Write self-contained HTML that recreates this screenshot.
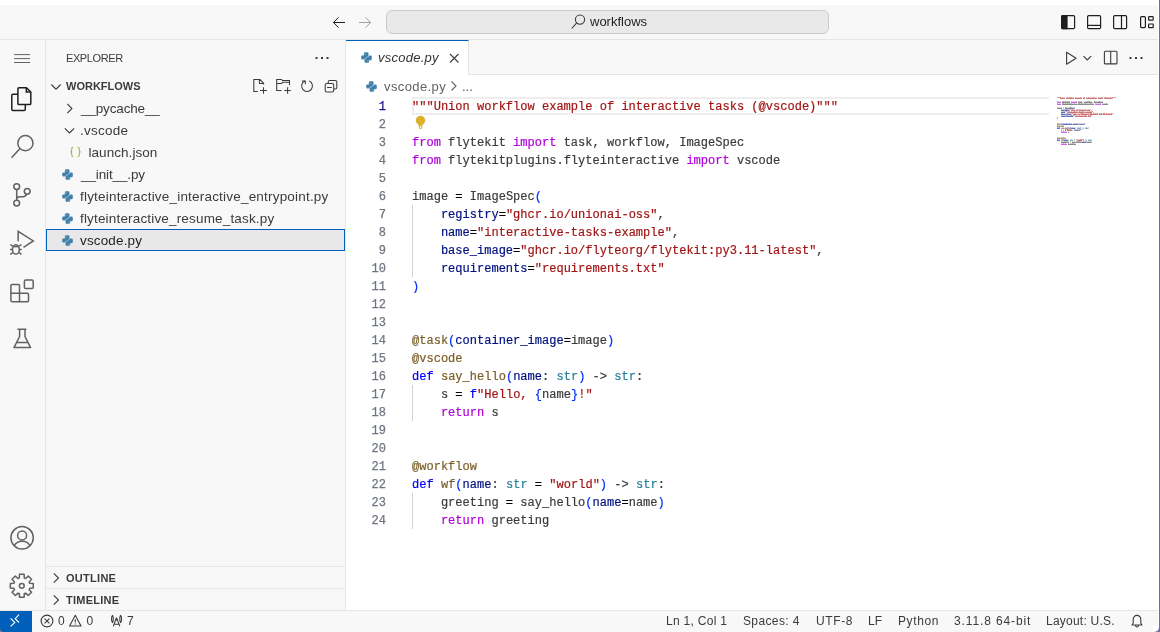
<!DOCTYPE html>
<html><head><meta charset="utf-8">
<style>
*{box-sizing:border-box;margin:0;padding:0}
html,body{width:1160px;height:632px;overflow:hidden;background:#ffffff}
body{position:relative;will-change:transform;font-family:"Liberation Sans",sans-serif;color:#3b3b3b}
.a{position:absolute}
svg{position:absolute;overflow:visible}
.t{position:absolute;white-space:pre;line-height:1}
#titlebar{left:0;top:5px;width:1158px;height:35px;background:#f8f8f8;border-bottom:1px solid #e5e5e5}
#act{left:0;top:40px;width:46px;height:571px;background:#f8f8f8;border-right:1px solid #e5e5e5}
#side{left:46px;top:40px;width:300px;height:571px;background:#f8f8f8;border-right:1px solid #e5e5e5}
#tabs{left:346px;top:40px;width:812px;height:35px;background:#f8f8f8;border-bottom:1px solid #e5e5e5}
#editor{left:346px;top:75px;width:813px;height:536px;background:#fff}
#status{left:0;top:610px;width:1158px;height:22px;background:#f8f8f8;border-top:1px solid #e5e5e5}
#rightedge{left:1159px;top:0;width:1px;height:632px;background:#6e6e96}
.code{position:absolute;left:412px;font-family:"Liberation Mono",monospace;font-size:12.04px;line-height:18px;white-space:pre;color:#3b3b3b;-webkit-text-stroke:0.2px}
.ln{position:absolute;left:350px;width:36px;text-align:right;font-family:"Liberation Mono",monospace;font-size:12px;line-height:18px;color:#6e7681;-webkit-text-stroke:0.25px}
.k{color:#af00db}.s{color:#a31515}.d{color:#0000ff}.f{color:#795e26}.p{color:#001080}.ty{color:#267f99}.b{color:#0431fa}.o{color:#000}
.row{position:absolute;left:46px;width:299px;height:22px;font-size:13.5px;line-height:22px;color:#3b3b3b;white-space:pre}
</style></head><body>
<div id="rightedge" class="a"></div>
<div id="titlebar" class="a"></div>
<div id="act" class="a"></div>
<div id="side" class="a"></div>
<div id="tabs" class="a"></div>
<div id="editor" class="a"></div>
<div id="status" class="a"></div>

<!-- title bar -->
<svg style="left:332px;top:16px" width="14" height="12" viewBox="0 0 14 12"><path d="M13 6.5H1.5M6.6 1.3L1.4 6.5l5.2 5.2" fill="none" stroke="#1f1f1f" stroke-width="1"/></svg>
<svg style="left:358px;top:16px" width="14" height="12" viewBox="0 0 14 12"><path d="M1 6.5h11.5M7.4 1.3l5.2 5.2-5.2 5.2" fill="none" stroke="#a0a0a0" stroke-width="1"/></svg>
<div class="a" style="left:386px;top:10px;width:443px;height:24px;background:#e9e9e9;border:1px solid #cbcbcb;border-radius:6px"></div>
<svg style="left:571px;top:14px" width="15" height="15" viewBox="0 0 15 15"><circle cx="9" cy="5.6" r="4.6" fill="none" stroke="#3b3b3b" stroke-width="1.1"/><path d="M5.7 8.9L0.8 14.5" stroke="#3b3b3b" stroke-width="1.1"/></svg>
<div class="t" style="left:590px;top:15px;font-size:13px;color:#1f1f1f">workflows</div>


<!-- activity bar -->
<svg style="left:0;top:40px" width="46" height="571" viewBox="0 0 46 571">
 <g fill="none" stroke="#616161" stroke-width="1">
  <path d="M14 14.6h16M14 18.6h16M14 22.5h16"/>
 </g>
 <g fill="none" stroke="#1f1f1f" stroke-width="1.5" stroke-linejoin="round">
  <path d="M17.8 54.2H12.9a1.1 1.1 0 0 0-1.1 1.1v14a1.1 1.1 0 0 0 1.1 1.1h11.3a1.1 1.1 0 0 0 1.1-1.1v-4.5"/>
  <path d="M19 47.7h7.5l4.3 4.3v11.4a1.1 1.1 0 0 1-1.1 1.1H19a1.1 1.1 0 0 1-1.1-1.1V48.8a1.1 1.1 0 0 1 1.1-1.1z"/>
  <path d="M26.3 47.9v4.2h4.3" stroke-linejoin="miter"/>
 </g>
 <g fill="none" stroke="#616161" stroke-width="1.5">
  <circle cx="25.4" cy="103.2" r="7.6"/>
  <path d="M19.8 108.8L11.5 117.8"/>
  <circle cx="16.7" cy="146.6" r="2.9"/>
  <circle cx="27.2" cy="151.3" r="2.9"/>
  <circle cx="16.7" cy="163.1" r="2.9"/>
  <path d="M16.7 149.5v10.7M16.7 159.3c0-1.8 1.5-2.6 3.6-2.6h2.6c2.2 0 3.4-1.1 3.9-2.6"/>
  <path d="M18.15 201.2V191.3L33.3 200.9 23.5 207.3"/>
  <ellipse cx="15.9" cy="209.4" rx="3.4" ry="4.7"/><path d="M12.8 206.6h6.2"/>
  <path d="M12.7 206.1L10.3 204.5M19.1 206.1L21.5 204.5M10.1 209.6H12.5M21.7 209.6H19.3M12.7 212.6L10.3 214.3M19.1 212.6L21.5 214.3"/>
  <path d="M10.9 253.3V245.8a1.2 1.2 0 0 1 1.2-1.2H18.3a1.2 1.2 0 0 1 1.2 1.2V253.3H27.3a1.2 1.2 0 0 1 1.2 1.2V260.6a1.2 1.2 0 0 1-1.2 1.2H12.1a1.2 1.2 0 0 1-1.2-1.2ZM10.9 253.3H19.5V261.8"/>
  <rect x="24.4" y="240" width="8.8" height="8.6" rx="1.3"/>
  <path d="M17.4 289.2h9M19.6 289.2v7.3L14 307.6h16.6l-5.6-11.1v-7.3M16.4 302.4h11.2" stroke-linejoin="round"/>
  <circle cx="22.1" cy="497.8" r="11.2"/>
  <circle cx="22.1" cy="495.4" r="4.5"/>
  <path d="M14.2 505.8c1.6-3 4.5-4.6 7.9-4.6s6.3 1.6 7.9 4.6"/>
 </g>
 <g fill="none" stroke="#616161" stroke-width="1.5" stroke-linejoin="round">
  <path d="M29.73 543.35 L33.27 543.48 L33.27 548.12 L29.73 548.25 L29.14 549.67 L31.55 552.26 L28.26 555.55 L25.67 553.14 L24.25 553.73 L24.12 557.27 L19.48 557.27 L19.35 553.73 L17.93 553.14 L15.34 555.55 L12.05 552.26 L14.46 549.67 L13.87 548.25 L10.33 548.12 L10.33 543.48 L13.87 543.35 L14.46 541.93 L12.05 539.34 L15.34 536.05 L17.93 538.46 L19.35 537.87 L19.48 534.33 L24.12 534.33 L24.25 537.87 L25.67 538.46 L28.26 536.05 L31.55 539.34 L29.14 541.93Z"/>
  <circle cx="21.8" cy="545.8" r="2.4"/>
 </g>
</svg>

<!-- sidebar -->
<div class="t" style="left:66px;top:53px;font-size:11px;letter-spacing:-0.4px;color:#3b3b3b">EXPLORER</div>
<svg style="left:314px;top:56px" width="16" height="4" viewBox="0 0 16 4"><g fill="#3b3b3b"><rect x="1.5" y="1" width="2" height="2"/><rect x="7" y="1" width="2" height="2"/><rect x="12.5" y="1" width="2" height="2"/></g></svg>
<svg style="left:50px;top:80px" width="14" height="12" viewBox="0 0 14 12"><path d="M1.3 4.5l4.7 4.7 4.7-4.7" fill="none" stroke="#3b3b3b" stroke-width="1.1"/></svg>
<div class="t" style="left:66px;top:81px;font-size:11px;font-weight:bold;color:#3b3b3b">WORKFLOWS</div>
<svg style="left:245px;top:75px" width="100" height="22" viewBox="0 0 100 22" fill="none" stroke="#3b3b3b" stroke-width="1.05">
 <path d="M12.8 16.4H8.8V4.4h6.2l3.6 3.9v1.3M14.4 4.4v4h4.2"/>
 <path d="M15 15.4h7M18.5 12.2v6.6"/>
 <path d="M36.5 15.4h-4.8V4.4h4.8l1 1.1h7v4.4M31.7 8.5h4.8l1-1.2h7"/>
 <path d="M39.3 15.4h6.5M42.6 12.2v6.6"/>
 <path d="M64.3 6.1a5.4 5.4 0 1 1-4.5 0"/>
 <path d="M56.9 5.9h3.4v3.4"/>
 <rect x="83.2" y="5.5" width="8.6" height="8.5" rx="1.6"/>
 <rect x="80.2" y="8.5" width="8.5" height="8.5" rx="1.6" fill="#f8f8f8"/>
 <path d="M82.1 12.5h4.7"/>
</svg>
<div class="row" style="top:97px"><svg style="left:20px;top:6px" width="8" height="11" viewBox="0 0 8 11"><path d="M1.3 0.8l4.6 4.7-4.6 4.7" fill="none" stroke="#3b3b3b" stroke-width="1.1"/></svg><span class="a" style="left:35px;top:1px;letter-spacing:-0.15px">__pycache__</span></div>
<div class="row" style="top:119px"><svg style="left:18px;top:8px" width="12" height="8" viewBox="0 0 12 8"><path d="M0.8 1.3l4.7 4.6 4.7-4.6" fill="none" stroke="#3b3b3b" stroke-width="1.1"/></svg><span class="a" style="left:34px;top:1px;letter-spacing:0.23px">.vscode</span></div>
<div class="row" style="top:141px"><svg style="left:23px;top:5px" width="13" height="12" viewBox="0 0 13 12"><path d="M4.3 1.2c-1 0-1.6.5-1.6 1.5v1.9c0 .8-.5 1.3-1.3 1.3.8 0 1.3.5 1.3 1.3v1.9c0 1 .6 1.5 1.6 1.5M8.7 1.2c1 0 1.6.5 1.6 1.5v1.9c0 .8.5 1.3 1.3 1.3-.8 0-1.3.5-1.3 1.3v1.9c0 1-.6 1.5-1.6 1.5" fill="none" stroke="#b0b23a" stroke-width="1.1"/></svg><span class="a" style="left:42.5px;top:1px;letter-spacing:0.05px">launch.json</span></div>
<div class="row" style="top:163px"><svg class="py" style="left:16px;top:6px" width="11" height="11" viewBox="0 0 11 11"><use href="#pyi"/></svg><span class="a" style="left:35px;top:1px;letter-spacing:-0.12px">__init__.py</span></div>
<div class="row" style="top:185px"><svg class="py" style="left:16px;top:6px" width="11" height="11" viewBox="0 0 11 11"><use href="#pyi"/></svg><span class="a" style="left:34px;top:1px;letter-spacing:0.2px">flyteinteractive_interactive_entrypoint.py</span></div>
<div class="row" style="top:207px"><svg class="py" style="left:16px;top:6px" width="11" height="11" viewBox="0 0 11 11"><use href="#pyi"/></svg><span class="a" style="left:34px;top:1px;letter-spacing:0.17px">flyteinteractive_resume_task.py</span></div>
<div class="row" style="top:229px;background:#e8e8e8;border:1px solid #005fb8;line-height:20px"><svg class="py" style="left:15px;top:5px" width="11" height="11" viewBox="0 0 11 11"><use href="#pyi"/></svg><span class="a" style="left:33px;top:1px;color:#1f1f1f;letter-spacing:0.15px">vscode.py</span></div>
<div class="a" style="left:46px;top:566px;width:299px;height:1px;background:#e5e5e5"></div>
<div class="a" style="left:46px;top:588px;width:299px;height:1px;background:#e5e5e5"></div>
<svg style="left:50px;top:572px" width="12" height="12" viewBox="0 0 12 12"><path d="M3.8 1.3l4.7 4.7-4.7 4.7" fill="none" stroke="#3b3b3b" stroke-width="1.1"/></svg>
<div class="t" style="left:66px;top:573px;font-size:11px;font-weight:bold;letter-spacing:0.28px;color:#3b3b3b">OUTLINE</div>
<svg style="left:50px;top:594px" width="12" height="12" viewBox="0 0 12 12"><path d="M3.8 1.3l4.7 4.7-4.7 4.7" fill="none" stroke="#3b3b3b" stroke-width="1.1"/></svg>
<div class="t" style="left:66px;top:595px;font-size:11px;font-weight:bold;letter-spacing:0.25px;color:#3b3b3b">TIMELINE</div>
<svg width="0" height="0" style="position:absolute"><defs><g id="pyi"><path d="M2.8 3.4V1.4A1.2 1.2 0 0 1 4 0.2H6.3A1.2 1.2 0 0 1 7.5 1.4V4.0L2.9 7.2L2.6 7.5H1.4A1.2 1.2 0 0 1 0.2 6.3V4.6A1.2 1.2 0 0 1 1.4 3.4Z" fill="#4180a8"/><path d="M8.2 8.2V9.6A1.2 1.2 0 0 1 7 10.8H4.7A1.2 1.2 0 0 1 3.5 9.6V7.3L8.1 4.1L8.4 3.6H9.6A1.2 1.2 0 0 1 10.8 4.8V7A1.2 1.2 0 0 1 9.6 8.2Z" fill="#4180a8"/><circle cx="4" cy="1.9" r="0.6" fill="#fff" fill-opacity="0.5"/><circle cx="7" cy="9.1" r="0.6" fill="#fff" fill-opacity="0.5"/></g></defs></svg>

<!-- tabs -->
<div class="a" style="left:346px;top:40px;width:123px;height:35px;background:#fff;border-top:1px solid #005fb8;border-right:1px solid #e5e5e5"></div>
<svg style="left:360.5px;top:52px" width="11" height="11" viewBox="0 0 11 11"><use href="#pyi"/></svg>
<div class="t" style="left:378px;top:51px;font-size:13px;font-style:italic;letter-spacing:0.25px;color:#333">vscode.py</div>
<svg style="left:448px;top:52px" width="12" height="12" viewBox="0 0 12 12"><path d="M2 2l8.5 8.5M10.5 2L2 10.5" stroke="#3b3b3b" stroke-width="1.1"/></svg>
<svg style="left:1060px;top:45px" width="95" height="25" viewBox="0 0 95 25" fill="none" stroke="#3b3b3b" stroke-width="1.1">
 <path d="M6.6 7.2v12l9.5-6z" stroke-linejoin="round"/>
 <path d="M23.5 11.2l3.8 3.8 3.8-3.8"/>
 <rect x="44.4" y="6.3" width="12.6" height="12.6" rx="1"/><path d="M50.7 6.3v12.6"/>
</svg>
<svg style="left:1128px;top:56px" width="16" height="4" viewBox="0 0 16 4"><g fill="#3b3b3b"><rect x="1.5" y="1" width="2" height="2"/><rect x="7" y="1" width="2" height="2"/><rect x="12.5" y="1" width="2" height="2"/></g></svg>
<!-- breadcrumb -->
<svg style="left:366px;top:81px" width="11" height="11" viewBox="0 0 11 11"><use href="#pyi"/></svg>
<div class="t" style="left:384px;top:80px;font-size:13px;letter-spacing:0.4px;color:#616161">vscode.py</div>
<svg style="left:450px;top:80px" width="8" height="12" viewBox="0 0 8 12"><path d="M1.5 1.5l4.5 4.5-4.5 4.5" fill="none" stroke="#616161" stroke-width="1.1"/></svg>
<div class="t" style="left:462px;top:80px;font-size:13px;color:#616161">...</div>
<!-- current line -->
<div class="a" style="left:412px;top:97px;width:637px;height:18px;border:2px solid #eeeeee;border-right:0"></div>
<!-- indent guides -->
<div class="a" style="left:412px;top:205px;width:1px;height:72px;background:#d3d3d3"></div>
<div class="a" style="left:412px;top:385px;width:1px;height:36px;background:#d3d3d3"></div>
<div class="a" style="left:412px;top:493px;width:1px;height:36px;background:#d3d3d3"></div>
<!-- lightbulb -->
<svg style="left:414px;top:115px" width="13" height="15" viewBox="0 0 13 15"><circle cx="6.5" cy="5.5" r="4.7" fill="#dcb02c"/><path d="M4.6 9h3.8v3a1.9 1.9 0 0 1-3.8 0z" fill="#dcb02c"/><circle cx="6.5" cy="11.9" r="0.9" fill="#fff"/></svg>
<div class="ln" style="top:98px"><span style="color:#171184">1</span><br>2<br>3<br>4<br>5<br>6<br>7<br>8<br>9<br>10<br>11<br>12<br>13<br>14<br>15<br>16<br>17<br>18<br>19<br>20<br>21<br>22<br>23<br>24</div>
<div class="code" style="top:98px"><span class="s">"""Union workflow example of interactive tasks (@vscode)"""</span>

<span class="k">from</span> flytekit <span class="k">import</span> task, workflow, ImageSpec
<span class="k">from</span> flytekitplugins.flyteinteractive <span class="k">import</span> vscode

image <span class="o">=</span> ImageSpec<span class="b">(</span>
    <span class="p">registry</span><span class="o">=</span><span class="s">"ghcr.io/unionai-oss"</span>,
    <span class="p">name</span><span class="o">=</span><span class="s">"interactive-tasks-example"</span>,
    <span class="p">base_image</span><span class="o">=</span><span class="s">"ghcr.io/flyteorg/flytekit:py3.11-latest"</span>,
    <span class="p">requirements</span><span class="o">=</span><span class="s">"requirements.txt"</span>
<span class="b">)</span>


<span class="f">@task</span><span class="b">(</span><span class="p">container_image</span><span class="o">=</span>image<span class="b">)</span>
<span class="f">@vscode</span>
<span class="d">def</span> <span class="f">say_hello</span><span class="b">(</span><span class="p">name</span>: <span class="ty">str</span><span class="b">)</span> -&gt; <span class="ty">str</span>:
    s <span class="o">=</span> <span class="d">f</span><span class="s">"Hello, </span><span class="b">{</span>name<span class="b">}</span><span class="s">!"</span>
    <span class="k">return</span> s


<span class="f">@workflow</span>
<span class="d">def</span> <span class="f">wf</span><span class="b">(</span><span class="p">name</span>: <span class="ty">str</span> <span class="o">=</span> <span class="s">"world"</span><span class="b">)</span> -&gt; <span class="ty">str</span>:
    greeting <span class="o">=</span> say_hello<span class="b">(</span><span class="p">name</span><span class="o">=</span>name<span class="b">)</span>
    <span class="k">return</span> greeting</div>

<!-- layout icons -->
<svg style="left:1058px;top:12px" width="100" height="20" viewBox="0 0 100 20" fill="none" stroke="#1f1f1f" stroke-width="1.2">
 <rect x="3.6" y="3.6" width="13" height="13" rx="1.2"/><path d="M3.6 4.8a1.2 1.2 0 0 1 1.2-1.2H9v13H4.8a1.2 1.2 0 0 1-1.2-1.2z" fill="#1f1f1f"/>
 <rect x="29.6" y="3.6" width="13" height="13" rx="1.2"/><path d="M29.6 13.4h13"/>
 <rect x="55.6" y="3.6" width="13" height="13" rx="1.2"/><path d="M63.5 3.6v13"/>
 <rect x="82.6" y="4.6" width="4.8" height="11" rx="1"/><rect x="90.6" y="4.6" width="4.6" height="3.6" rx="0.7"/><rect x="90.6" y="12" width="4.6" height="3.6" rx="0.7"/>
</svg>
<!-- status bar -->
<div class="a" style="left:0;top:611px;width:32px;height:21px;background:#005fb8"></div>
<svg style="left:9px;top:613px" width="14" height="16" viewBox="0 0 14 16"><path d="M1.6 5.5l4.2 3.9-4.2 3.9M10 1.7L6.2 5.7 10 9.5" fill="none" stroke="#fff" stroke-width="1.1"/></svg>
<svg style="left:40px;top:614px" width="100" height="14" viewBox="0 0 100 14" fill="none" stroke="#3b3b3b" stroke-width="1.1">
 <circle cx="7" cy="7" r="5.9"/><path d="M4.6 4.6l4.8 4.8M9.4 4.6L4.6 9.4"/>
 <path d="M35.3 1.3L29.6 12h11.4z" stroke-linejoin="round"/><path d="M35.3 5.2v3.4M35.3 9.6v1"/>
 <path d="M72.5 1.4c-1.3 1.6-1.3 5.6 0 7.2M72.5 1.4c1.1 1.6 1.1 5.6 0 7.2M80.6 1.4c-1.1 1.6-1.1 5.6 0 7.2M80.6 1.4c1.3 1.6 1.3 5.6 0 7.2M76.5 3.6L73.3 12.4M76.5 3.6l3.4 8.8M74.4 10.2h4.3"/><circle cx="76.5" cy="5.5" r="1" fill="#3b3b3b" stroke="none"/>
</svg>
<div class="t" style="left:58px;top:615px;font-size:12px;color:#3b3b3b">0</div>
<div class="t" style="left:86.5px;top:615px;font-size:12px;color:#3b3b3b">0</div>
<div class="t" style="left:127px;top:615px;font-size:12px;color:#3b3b3b">7</div>
<div class="t" style="left:666px;top:615px;font-size:12px;color:#3b3b3b;letter-spacing:0.3px">Ln 1, Col 1</div>
<div class="t" style="left:743px;top:615px;font-size:12px;color:#3b3b3b;letter-spacing:0.37px">Spaces: 4</div>
<div class="t" style="left:816px;top:615px;font-size:12px;color:#3b3b3b;letter-spacing:0.6px">UTF-8</div>
<div class="t" style="left:868px;top:615px;font-size:12px;color:#3b3b3b">LF</div>
<div class="t" style="left:898px;top:615px;font-size:12px;color:#3b3b3b;letter-spacing:0.6px">Python</div>
<div class="t" style="left:954px;top:615px;font-size:12px;color:#3b3b3b;letter-spacing:0.88px">3.11.8 64-bit</div>
<div class="t" style="left:1046px;top:615px;font-size:12px;color:#3b3b3b;letter-spacing:0.23px">Layout: U.S.</div>
<svg style="left:1130px;top:614px" width="14" height="14" viewBox="0 0 14 14"><path d="M2 11h10l-1.2-1.8V5.5A3.8 3.8 0 0 0 7 1.4a3.8 3.8 0 0 0-3.8 4.1v3.7z M5.6 11.6a1.4 1.4 0 0 0 2.8 0" fill="none" stroke="#3b3b3b" stroke-width="1.1" stroke-linejoin="round"/></svg>
<!-- minimap -->
<svg style="left:1057px;top:97px" width="80" height="48" viewBox="0 0 80 48" shape-rendering="crispEdges"><path d="M6 10h1v1h-1zM6 11h1v1h-1zM12 12h1v1h-1zM12 13h1v1h-1zM8 14h1v1h-1zM8 15h1v1h-1zM14 16h1v1h-1zM14 17h1v1h-1zM16 18h1v1h-1zM16 19h1v1h-1zM21 26h1v1h-1zM21 27h1v1h-1zM6 32h1v1h-1zM6 33h1v1h-1zM17 42h1v1h-1zM17 43h1v1h-1zM13 44h1v1h-1zM13 45h1v1h-1zM29 44h1v1h-1zM29 45h1v1h-1z" fill="#000000" fill-opacity="0.21"/><path d="M1 30h1v1h-1zM1 42h1v1h-1z" fill="#0000ff" fill-opacity="0.21"/><path d="M0 30h1v1h-1zM2 30h1v1h-1zM8 32h1v1h-1zM0 42h1v1h-1zM2 42h1v1h-1z" fill="#0000ff" fill-opacity="0.40"/><path d="M0 31h1v1h-1zM1 31h1v1h-1zM2 31h1v1h-1zM8 33h1v1h-1zM0 43h1v1h-1zM1 43h1v1h-1zM2 43h1v1h-1z" fill="#0000ff" fill-opacity="0.60"/><path d="M4 12h1v1h-1zM5 12h1v1h-1zM6 12h1v1h-1zM8 12h1v1h-1zM10 12h1v1h-1zM11 12h1v1h-1zM4 14h1v1h-1zM5 14h1v1h-1zM6 14h1v1h-1zM7 14h1v1h-1zM5 16h1v1h-1zM6 16h1v1h-1zM7 16h1v1h-1zM10 16h1v1h-1zM11 16h1v1h-1zM12 16h1v1h-1zM13 16h1v1h-1zM4 18h1v1h-1zM5 18h1v1h-1zM6 18h1v1h-1zM7 18h1v1h-1zM9 18h1v1h-1zM10 18h1v1h-1zM11 18h1v1h-1zM12 18h1v1h-1zM13 18h1v1h-1zM15 18h1v1h-1zM6 26h1v1h-1zM7 26h1v1h-1zM8 26h1v1h-1zM10 26h1v1h-1zM12 26h1v1h-1zM13 26h1v1h-1zM14 26h1v1h-1zM17 26h1v1h-1zM18 26h1v1h-1zM19 26h1v1h-1zM20 26h1v1h-1zM14 30h1v1h-1zM15 30h1v1h-1zM16 30h1v1h-1zM17 30h1v1h-1zM7 42h1v1h-1zM8 42h1v1h-1zM9 42h1v1h-1zM10 42h1v1h-1zM25 44h1v1h-1zM26 44h1v1h-1zM27 44h1v1h-1zM28 44h1v1h-1z" fill="#001080" fill-opacity="0.21"/><path d="M7 12h1v1h-1zM9 16h1v1h-1zM8 18h1v1h-1zM11 26h1v1h-1zM16 26h1v1h-1z" fill="#001080" fill-opacity="0.31"/><path d="M9 12h1v1h-1zM4 16h1v1h-1zM8 17h1v1h-1zM14 18h1v1h-1zM9 26h1v1h-1zM15 27h1v1h-1z" fill="#001080" fill-opacity="0.40"/><path d="M7 13h1v1h-1zM9 17h1v1h-1zM8 19h1v1h-1zM11 27h1v1h-1zM16 27h1v1h-1z" fill="#001080" fill-opacity="0.50"/><path d="M4 13h1v1h-1zM5 13h1v1h-1zM6 13h1v1h-1zM8 13h1v1h-1zM9 13h1v1h-1zM10 13h1v1h-1zM11 13h1v1h-1zM4 15h1v1h-1zM5 15h1v1h-1zM6 15h1v1h-1zM7 15h1v1h-1zM4 17h1v1h-1zM5 17h1v1h-1zM6 17h1v1h-1zM7 17h1v1h-1zM10 17h1v1h-1zM11 17h1v1h-1zM12 17h1v1h-1zM13 17h1v1h-1zM4 19h1v1h-1zM5 19h1v1h-1zM6 19h1v1h-1zM7 19h1v1h-1zM9 19h1v1h-1zM10 19h1v1h-1zM11 19h1v1h-1zM12 19h1v1h-1zM13 19h1v1h-1zM14 19h1v1h-1zM15 19h1v1h-1zM6 27h1v1h-1zM7 27h1v1h-1zM8 27h1v1h-1zM9 27h1v1h-1zM10 27h1v1h-1zM12 27h1v1h-1zM13 27h1v1h-1zM14 27h1v1h-1zM17 27h1v1h-1zM18 27h1v1h-1zM19 27h1v1h-1zM20 27h1v1h-1zM14 31h1v1h-1zM15 31h1v1h-1zM16 31h1v1h-1zM17 31h1v1h-1zM7 43h1v1h-1zM8 43h1v1h-1zM9 43h1v1h-1zM10 43h1v1h-1zM25 45h1v1h-1zM26 45h1v1h-1zM27 45h1v1h-1zM28 45h1v1h-1z" fill="#001080" fill-opacity="0.60"/><path d="M17 10h1v1h-1zM17 11h1v1h-1zM0 20h1v1h-1zM0 21h1v1h-1zM5 26h1v1h-1zM5 27h1v1h-1zM27 26h1v1h-1zM27 27h1v1h-1zM13 30h1v1h-1zM13 31h1v1h-1zM23 30h1v1h-1zM23 31h1v1h-1zM17 32h1v1h-1zM17 33h1v1h-1zM22 32h1v1h-1zM22 33h1v1h-1zM6 42h1v1h-1zM6 43h1v1h-1zM26 42h1v1h-1zM26 43h1v1h-1zM24 44h1v1h-1zM24 45h1v1h-1zM34 44h1v1h-1zM34 45h1v1h-1z" fill="#0431fa" fill-opacity="0.40"/><path d="M20 30h1v1h-1zM22 30h1v1h-1zM28 30h1v1h-1zM30 30h1v1h-1zM13 42h1v1h-1zM15 42h1v1h-1zM31 42h1v1h-1zM33 42h1v1h-1z" fill="#267f99" fill-opacity="0.21"/><path d="M21 30h1v1h-1zM29 30h1v1h-1zM14 42h1v1h-1zM32 42h1v1h-1z" fill="#267f99" fill-opacity="0.40"/><path d="M20 31h1v1h-1zM21 31h1v1h-1zM22 31h1v1h-1zM28 31h1v1h-1zM29 31h1v1h-1zM30 31h1v1h-1zM13 43h1v1h-1zM14 43h1v1h-1zM15 43h1v1h-1zM31 43h1v1h-1zM32 43h1v1h-1zM33 43h1v1h-1z" fill="#267f99" fill-opacity="0.60"/><path d="M25 30h1v1h-1zM28 42h1v1h-1z" fill="#3b3b3b" fill-opacity="0.10"/><path d="M7 4h1v1h-1zM9 4h1v1h-1zM22 4h1v1h-1zM23 4h1v1h-1zM27 4h1v1h-1zM28 4h1v1h-1zM29 4h1v1h-1zM33 4h1v1h-1zM34 4h1v1h-1zM38 4h1v1h-1zM39 4h1v1h-1zM40 4h1v1h-1zM41 4h1v1h-1zM43 4h1v1h-1zM44 4h1v1h-1zM45 4h1v1h-1zM7 6h1v1h-1zM9 6h1v1h-1zM13 6h1v1h-1zM15 6h1v1h-1zM16 6h1v1h-1zM18 6h1v1h-1zM19 6h1v1h-1zM23 6h1v1h-1zM25 6h1v1h-1zM27 6h1v1h-1zM29 6h1v1h-1zM30 6h1v1h-1zM31 6h1v1h-1zM32 6h1v1h-1zM35 6h1v1h-1zM36 6h1v1h-1zM45 6h1v1h-1zM46 6h1v1h-1zM47 6h1v1h-1zM48 6h1v1h-1zM50 6h1v1h-1zM1 10h1v1h-1zM2 10h1v1h-1zM3 10h1v1h-1zM4 10h1v1h-1zM9 10h1v1h-1zM10 10h1v1h-1zM11 10h1v1h-1zM12 10h1v1h-1zM14 10h1v1h-1zM15 10h1v1h-1zM16 10h1v1h-1zM23 26h1v1h-1zM24 26h1v1h-1zM25 26h1v1h-1zM26 26h1v1h-1zM18 30h1v1h-1zM18 31h1v1h-1zM26 30h1v1h-1zM31 30h1v1h-1zM31 31h1v1h-1zM4 32h1v1h-1zM18 32h1v1h-1zM19 32h1v1h-1zM20 32h1v1h-1zM21 32h1v1h-1zM11 34h1v1h-1zM11 42h1v1h-1zM11 43h1v1h-1zM29 42h1v1h-1zM34 42h1v1h-1zM34 43h1v1h-1zM4 44h1v1h-1zM5 44h1v1h-1zM6 44h1v1h-1zM7 44h1v1h-1zM10 44h1v1h-1zM11 44h1v1h-1zM15 44h1v1h-1zM16 44h1v1h-1zM17 44h1v1h-1zM20 44h1v1h-1zM23 44h1v1h-1zM30 44h1v1h-1zM31 44h1v1h-1zM32 44h1v1h-1zM33 44h1v1h-1zM11 46h1v1h-1zM12 46h1v1h-1zM13 46h1v1h-1zM14 46h1v1h-1zM17 46h1v1h-1zM18 46h1v1h-1z" fill="#3b3b3b" fill-opacity="0.21"/><path d="M11 4h1v1h-1zM25 5h1v1h-1zM35 5h1v1h-1zM11 6h1v1h-1zM17 6h1v1h-1zM20 7h1v1h-1zM26 6h1v1h-1zM34 6h1v1h-1zM0 10h1v1h-1zM34 13h1v1h-1zM36 15h1v1h-1zM56 17h1v1h-1zM22 26h1v1h-1zM25 31h1v1h-1zM26 31h1v1h-1zM28 43h1v1h-1zM29 43h1v1h-1zM9 44h1v1h-1zM16 46h1v1h-1z" fill="#3b3b3b" fill-opacity="0.31"/><path d="M5 4h1v1h-1zM6 4h1v1h-1zM8 4h1v1h-1zM10 4h1v1h-1zM12 4h1v1h-1zM21 4h1v1h-1zM24 4h1v1h-1zM30 4h1v1h-1zM31 4h1v1h-1zM32 4h1v1h-1zM5 6h1v1h-1zM6 6h1v1h-1zM8 6h1v1h-1zM10 6h1v1h-1zM12 6h1v1h-1zM14 6h1v1h-1zM21 6h1v1h-1zM22 6h1v1h-1zM24 6h1v1h-1zM28 6h1v1h-1zM33 6h1v1h-1zM49 6h1v1h-1zM8 44h1v1h-1zM18 45h1v1h-1zM19 44h1v1h-1zM21 44h1v1h-1zM22 44h1v1h-1zM15 46h1v1h-1z" fill="#3b3b3b" fill-opacity="0.40"/><path d="M11 5h1v1h-1zM11 7h1v1h-1zM17 7h1v1h-1zM26 7h1v1h-1zM34 7h1v1h-1zM0 11h1v1h-1zM22 27h1v1h-1zM9 45h1v1h-1zM16 47h1v1h-1z" fill="#3b3b3b" fill-opacity="0.50"/><path d="M5 5h1v1h-1zM6 5h1v1h-1zM7 5h1v1h-1zM8 5h1v1h-1zM9 5h1v1h-1zM10 5h1v1h-1zM12 5h1v1h-1zM21 5h1v1h-1zM22 5h1v1h-1zM23 5h1v1h-1zM24 5h1v1h-1zM27 5h1v1h-1zM28 5h1v1h-1zM29 5h1v1h-1zM30 5h1v1h-1zM31 5h1v1h-1zM32 5h1v1h-1zM33 5h1v1h-1zM34 5h1v1h-1zM37 4h1v1h-1zM37 5h1v1h-1zM38 5h1v1h-1zM39 5h1v1h-1zM40 5h1v1h-1zM41 5h1v1h-1zM42 4h1v1h-1zM42 5h1v1h-1zM43 5h1v1h-1zM44 5h1v1h-1zM45 5h1v1h-1zM5 7h1v1h-1zM6 7h1v1h-1zM7 7h1v1h-1zM8 7h1v1h-1zM9 7h1v1h-1zM10 7h1v1h-1zM12 7h1v1h-1zM13 7h1v1h-1zM14 7h1v1h-1zM15 7h1v1h-1zM16 7h1v1h-1zM18 7h1v1h-1zM19 7h1v1h-1zM21 7h1v1h-1zM22 7h1v1h-1zM23 7h1v1h-1zM24 7h1v1h-1zM25 7h1v1h-1zM27 7h1v1h-1zM28 7h1v1h-1zM29 7h1v1h-1zM30 7h1v1h-1zM31 7h1v1h-1zM32 7h1v1h-1zM33 7h1v1h-1zM35 7h1v1h-1zM36 7h1v1h-1zM45 7h1v1h-1zM46 7h1v1h-1zM47 7h1v1h-1zM48 7h1v1h-1zM49 7h1v1h-1zM50 7h1v1h-1zM1 11h1v1h-1zM2 11h1v1h-1zM3 11h1v1h-1zM4 11h1v1h-1zM8 10h1v1h-1zM8 11h1v1h-1zM9 11h1v1h-1zM10 11h1v1h-1zM11 11h1v1h-1zM12 11h1v1h-1zM13 10h1v1h-1zM13 11h1v1h-1zM14 11h1v1h-1zM15 11h1v1h-1zM16 11h1v1h-1zM23 27h1v1h-1zM24 27h1v1h-1zM25 27h1v1h-1zM26 27h1v1h-1zM4 33h1v1h-1zM18 33h1v1h-1zM19 33h1v1h-1zM20 33h1v1h-1zM21 33h1v1h-1zM11 35h1v1h-1zM4 45h1v1h-1zM5 45h1v1h-1zM6 45h1v1h-1zM7 45h1v1h-1zM8 45h1v1h-1zM10 45h1v1h-1zM11 45h1v1h-1zM15 45h1v1h-1zM16 45h1v1h-1zM17 45h1v1h-1zM19 45h1v1h-1zM20 45h1v1h-1zM21 45h1v1h-1zM22 45h1v1h-1zM23 45h1v1h-1zM30 45h1v1h-1zM31 45h1v1h-1zM32 45h1v1h-1zM33 45h1v1h-1zM11 47h1v1h-1zM12 47h1v1h-1zM13 47h1v1h-1zM14 47h1v1h-1zM15 47h1v1h-1zM17 47h1v1h-1zM18 47h1v1h-1z" fill="#3b3b3b" fill-opacity="0.60"/><path d="M2 26h1v1h-1zM3 26h1v1h-1zM1 28h1v1h-1zM2 28h1v1h-1zM3 28h1v1h-1zM4 28h1v1h-1zM6 28h1v1h-1zM4 30h1v1h-1zM5 30h1v1h-1zM6 30h1v1h-1zM9 30h1v1h-1zM12 30h1v1h-1zM1 40h1v1h-1zM2 40h1v1h-1zM3 40h1v1h-1zM7 40h1v1h-1zM8 40h1v1h-1zM4 42h1v1h-1z" fill="#795e26" fill-opacity="0.21"/><path d="M1 26h1v1h-1zM4 26h1v1h-1zM5 28h1v1h-1zM7 31h1v1h-1zM8 30h1v1h-1zM10 30h1v1h-1zM11 30h1v1h-1zM4 40h1v1h-1zM5 40h1v1h-1zM6 40h1v1h-1zM5 42h1v1h-1z" fill="#795e26" fill-opacity="0.40"/><path d="M0 26h1v1h-1zM0 28h1v1h-1zM0 40h1v1h-1z" fill="#795e26" fill-opacity="0.50"/><path d="M0 27h1v1h-1zM1 27h1v1h-1zM2 27h1v1h-1zM3 27h1v1h-1zM4 27h1v1h-1zM0 29h1v1h-1zM1 29h1v1h-1zM2 29h1v1h-1zM3 29h1v1h-1zM4 29h1v1h-1zM5 29h1v1h-1zM6 29h1v1h-1zM4 31h1v1h-1zM5 31h1v1h-1zM6 31h1v1h-1zM8 31h1v1h-1zM9 31h1v1h-1zM10 31h1v1h-1zM11 31h1v1h-1zM12 31h1v1h-1zM0 41h1v1h-1zM1 41h1v1h-1zM2 41h1v1h-1zM3 41h1v1h-1zM4 41h1v1h-1zM5 41h1v1h-1zM6 41h1v1h-1zM7 41h1v1h-1zM8 41h1v1h-1zM4 43h1v1h-1zM5 43h1v1h-1z" fill="#795e26" fill-opacity="0.60"/><path d="M29 12h1v1h-1zM21 14h1v1h-1zM27 14h1v1h-1zM48 16h1v1h-1z" fill="#a31515" fill-opacity="0.10"/><path d="M4 0h1v1h-1zM6 0h1v1h-1zM7 0h1v1h-1zM9 0h1v1h-1zM10 0h1v1h-1zM11 0h1v1h-1zM15 0h1v1h-1zM16 0h1v1h-1zM18 0h1v1h-1zM19 0h1v1h-1zM20 0h1v1h-1zM21 0h1v1h-1zM22 0h1v1h-1zM24 0h1v1h-1zM26 0h1v1h-1zM30 0h1v1h-1zM32 0h1v1h-1zM33 0h1v1h-1zM34 0h1v1h-1zM35 0h1v1h-1zM38 0h1v1h-1zM39 0h1v1h-1zM42 0h1v1h-1zM43 0h1v1h-1zM45 0h1v1h-1zM49 0h1v1h-1zM50 0h1v1h-1zM51 0h1v1h-1zM52 0h1v1h-1zM54 0h1v1h-1zM14 12h1v1h-1zM16 12h1v1h-1zM17 12h1v1h-1zM20 12h1v1h-1zM22 12h1v1h-1zM23 12h1v1h-1zM25 12h1v1h-1zM26 12h1v1h-1zM27 12h1v1h-1zM30 12h1v1h-1zM31 12h1v1h-1zM32 12h1v1h-1zM11 14h1v1h-1zM13 14h1v1h-1zM14 14h1v1h-1zM15 14h1v1h-1zM16 14h1v1h-1zM19 14h1v1h-1zM20 14h1v1h-1zM23 14h1v1h-1zM24 14h1v1h-1zM26 14h1v1h-1zM28 14h1v1h-1zM29 14h1v1h-1zM30 14h1v1h-1zM31 14h1v1h-1zM32 14h1v1h-1zM34 14h1v1h-1zM16 16h1v1h-1zM18 16h1v1h-1zM19 16h1v1h-1zM22 16h1v1h-1zM26 16h1v1h-1zM28 16h1v1h-1zM29 16h1v1h-1zM30 16h1v1h-1zM31 16h1v1h-1zM35 16h1v1h-1zM37 16h1v1h-1zM41 16h1v1h-1zM41 17h1v1h-1zM42 16h1v1h-1zM43 16h1v1h-1zM50 16h1v1h-1zM52 16h1v1h-1zM53 16h1v1h-1zM18 18h1v1h-1zM19 18h1v1h-1zM20 18h1v1h-1zM21 18h1v1h-1zM23 18h1v1h-1zM24 18h1v1h-1zM25 18h1v1h-1zM26 18h1v1h-1zM27 18h1v1h-1zM29 18h1v1h-1zM32 18h1v1h-1zM11 32h1v1h-1zM14 32h1v1h-1zM23 33h1v1h-1zM20 42h1v1h-1zM21 42h1v1h-1zM22 42h1v1h-1z" fill="#a31515" fill-opacity="0.21"/><path d="M5 0h1v1h-1zM29 0h1v1h-1zM37 0h1v1h-1zM18 13h1v1h-1zM19 12h1v1h-1zM21 12h1v1h-1zM21 13h1v1h-1zM24 12h1v1h-1zM28 12h1v1h-1zM29 13h1v1h-1zM10 14h1v1h-1zM18 14h1v1h-1zM21 15h1v1h-1zM27 15h1v1h-1zM20 17h1v1h-1zM21 16h1v1h-1zM23 16h1v1h-1zM23 17h1v1h-1zM32 16h1v1h-1zM32 17h1v1h-1zM39 16h1v1h-1zM45 17h1v1h-1zM48 17h1v1h-1zM22 18h1v1h-1zM30 19h1v1h-1zM15 33h1v1h-1z" fill="#a31515" fill-opacity="0.31"/><path d="M0 0h1v1h-1zM1 0h1v1h-1zM2 0h1v1h-1zM12 0h1v1h-1zM13 0h1v1h-1zM14 0h1v1h-1zM23 0h1v1h-1zM27 0h1v1h-1zM31 0h1v1h-1zM36 0h1v1h-1zM41 0h1v1h-1zM44 0h1v1h-1zM47 0h1v1h-1zM47 1h1v1h-1zM53 0h1v1h-1zM55 0h1v1h-1zM55 1h1v1h-1zM56 0h1v1h-1zM57 0h1v1h-1zM58 0h1v1h-1zM13 12h1v1h-1zM15 12h1v1h-1zM33 12h1v1h-1zM9 14h1v1h-1zM12 14h1v1h-1zM17 14h1v1h-1zM22 14h1v1h-1zM25 14h1v1h-1zM33 14h1v1h-1zM35 14h1v1h-1zM15 16h1v1h-1zM17 16h1v1h-1zM24 16h1v1h-1zM25 16h1v1h-1zM27 16h1v1h-1zM33 16h1v1h-1zM34 16h1v1h-1zM36 16h1v1h-1zM38 16h1v1h-1zM40 16h1v1h-1zM49 16h1v1h-1zM51 16h1v1h-1zM54 16h1v1h-1zM55 16h1v1h-1zM17 18h1v1h-1zM28 18h1v1h-1zM31 18h1v1h-1zM33 18h1v1h-1zM34 18h1v1h-1zM9 32h1v1h-1zM12 32h1v1h-1zM13 32h1v1h-1zM23 32h1v1h-1zM24 32h1v1h-1zM19 42h1v1h-1zM23 42h1v1h-1zM24 42h1v1h-1zM25 42h1v1h-1z" fill="#a31515" fill-opacity="0.40"/><path d="M5 1h1v1h-1zM29 1h1v1h-1zM37 1h1v1h-1zM48 0h1v1h-1zM19 13h1v1h-1zM24 13h1v1h-1zM28 13h1v1h-1zM10 15h1v1h-1zM18 15h1v1h-1zM21 17h1v1h-1zM39 17h1v1h-1zM22 19h1v1h-1z" fill="#a31515" fill-opacity="0.50"/><path d="M3 0h1v1h-1zM3 1h1v1h-1zM4 1h1v1h-1zM6 1h1v1h-1zM7 1h1v1h-1zM9 1h1v1h-1zM10 1h1v1h-1zM11 1h1v1h-1zM12 1h1v1h-1zM13 1h1v1h-1zM14 1h1v1h-1zM15 1h1v1h-1zM16 1h1v1h-1zM18 1h1v1h-1zM19 1h1v1h-1zM20 1h1v1h-1zM21 1h1v1h-1zM22 1h1v1h-1zM23 1h1v1h-1zM24 1h1v1h-1zM26 1h1v1h-1zM27 1h1v1h-1zM30 1h1v1h-1zM31 1h1v1h-1zM32 1h1v1h-1zM33 1h1v1h-1zM34 1h1v1h-1zM35 1h1v1h-1zM36 1h1v1h-1zM38 1h1v1h-1zM39 1h1v1h-1zM41 1h1v1h-1zM42 1h1v1h-1zM43 1h1v1h-1zM44 1h1v1h-1zM45 1h1v1h-1zM48 1h1v1h-1zM49 1h1v1h-1zM50 1h1v1h-1zM51 1h1v1h-1zM52 1h1v1h-1zM53 1h1v1h-1zM54 1h1v1h-1zM14 13h1v1h-1zM15 13h1v1h-1zM16 13h1v1h-1zM17 13h1v1h-1zM20 13h1v1h-1zM22 13h1v1h-1zM23 13h1v1h-1zM25 13h1v1h-1zM26 13h1v1h-1zM27 13h1v1h-1zM30 13h1v1h-1zM31 13h1v1h-1zM32 13h1v1h-1zM11 15h1v1h-1zM12 15h1v1h-1zM13 15h1v1h-1zM14 15h1v1h-1zM15 15h1v1h-1zM16 15h1v1h-1zM17 15h1v1h-1zM19 15h1v1h-1zM20 15h1v1h-1zM22 15h1v1h-1zM23 15h1v1h-1zM24 15h1v1h-1zM25 15h1v1h-1zM26 15h1v1h-1zM28 15h1v1h-1zM29 15h1v1h-1zM30 15h1v1h-1zM31 15h1v1h-1zM32 15h1v1h-1zM33 15h1v1h-1zM34 15h1v1h-1zM16 17h1v1h-1zM17 17h1v1h-1zM18 17h1v1h-1zM19 17h1v1h-1zM22 17h1v1h-1zM24 17h1v1h-1zM25 17h1v1h-1zM26 17h1v1h-1zM27 17h1v1h-1zM28 17h1v1h-1zM29 17h1v1h-1zM30 17h1v1h-1zM31 17h1v1h-1zM33 17h1v1h-1zM34 17h1v1h-1zM35 17h1v1h-1zM36 17h1v1h-1zM37 17h1v1h-1zM38 17h1v1h-1zM40 17h1v1h-1zM42 17h1v1h-1zM43 17h1v1h-1zM44 16h1v1h-1zM44 17h1v1h-1zM46 16h1v1h-1zM46 17h1v1h-1zM47 16h1v1h-1zM47 17h1v1h-1zM49 17h1v1h-1zM50 17h1v1h-1zM51 17h1v1h-1zM52 17h1v1h-1zM53 17h1v1h-1zM54 17h1v1h-1zM18 19h1v1h-1zM19 19h1v1h-1zM20 19h1v1h-1zM21 19h1v1h-1zM23 19h1v1h-1zM24 19h1v1h-1zM25 19h1v1h-1zM26 19h1v1h-1zM27 19h1v1h-1zM28 19h1v1h-1zM29 19h1v1h-1zM31 19h1v1h-1zM32 19h1v1h-1zM33 19h1v1h-1zM10 32h1v1h-1zM10 33h1v1h-1zM11 33h1v1h-1zM12 33h1v1h-1zM13 33h1v1h-1zM14 33h1v1h-1zM20 43h1v1h-1zM21 43h1v1h-1zM22 43h1v1h-1zM23 43h1v1h-1zM24 43h1v1h-1z" fill="#a31515" fill-opacity="0.60"/><path d="M1 4h1v1h-1zM2 4h1v1h-1zM3 4h1v1h-1zM15 4h1v1h-1zM16 4h1v1h-1zM17 4h1v1h-1zM18 4h1v1h-1zM1 6h1v1h-1zM2 6h1v1h-1zM3 6h1v1h-1zM39 6h1v1h-1zM40 6h1v1h-1zM41 6h1v1h-1zM42 6h1v1h-1zM4 34h1v1h-1zM5 34h1v1h-1zM7 34h1v1h-1zM8 34h1v1h-1zM9 34h1v1h-1zM4 46h1v1h-1zM5 46h1v1h-1zM7 46h1v1h-1zM8 46h1v1h-1zM9 46h1v1h-1z" fill="#af00db" fill-opacity="0.21"/><path d="M14 4h1v1h-1zM38 6h1v1h-1z" fill="#af00db" fill-opacity="0.31"/><path d="M0 4h1v1h-1zM19 4h1v1h-1zM0 6h1v1h-1zM43 6h1v1h-1zM6 34h1v1h-1zM6 46h1v1h-1z" fill="#af00db" fill-opacity="0.40"/><path d="M14 5h1v1h-1zM38 7h1v1h-1z" fill="#af00db" fill-opacity="0.50"/><path d="M0 5h1v1h-1zM1 5h1v1h-1zM2 5h1v1h-1zM3 5h1v1h-1zM15 5h1v1h-1zM16 5h1v1h-1zM17 5h1v1h-1zM18 5h1v1h-1zM19 5h1v1h-1zM0 7h1v1h-1zM1 7h1v1h-1zM2 7h1v1h-1zM3 7h1v1h-1zM39 7h1v1h-1zM40 7h1v1h-1zM41 7h1v1h-1zM42 7h1v1h-1zM43 7h1v1h-1zM4 35h1v1h-1zM5 35h1v1h-1zM6 35h1v1h-1zM7 35h1v1h-1zM8 35h1v1h-1zM9 35h1v1h-1zM4 47h1v1h-1zM5 47h1v1h-1zM6 47h1v1h-1zM7 47h1v1h-1zM8 47h1v1h-1zM9 47h1v1h-1z" fill="#af00db" fill-opacity="0.60"/></svg>

<!-- corners -->
<div class="a" style="left:1153px;top:626px;width:6px;height:6px;background:#7a7aa6"><div style="width:6px;height:6px;background:#fff;border-bottom-right-radius:5px"></div></div>
<div class="a" style="left:0;top:627px;width:5px;height:5px;background:#8a7a9a"><div style="width:5px;height:5px;background:#005fb8;border-bottom-left-radius:4px"></div></div>
</body></html>
